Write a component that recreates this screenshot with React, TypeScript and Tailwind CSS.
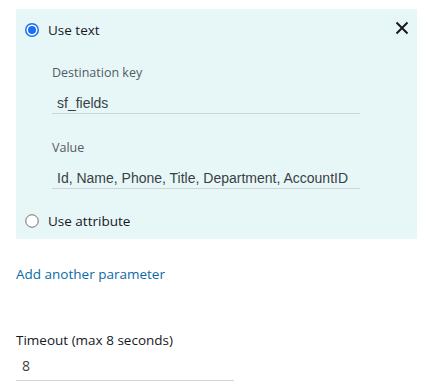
import { useState } from 'react'

const ember = { fontFamily: '"Open Sans", "Noto Sans", sans-serif' }
const arial = { fontFamily: '"Liberation Sans", Arial, sans-serif' }

function Radio({ checked }: { checked: boolean }) {
  return checked ? (
    <svg width="14" height="14" viewBox="0 0 14 14" className="shrink-0">
      <circle cx="7" cy="7" r="6.25" fill="#fff" stroke="#1a6ef2" strokeWidth="1.5" />
      <circle cx="7" cy="7" r="4" fill="#1a6ef2" />
    </svg>
  ) : (
    <svg width="14" height="14" viewBox="0 0 14 14" className="shrink-0">
      <circle cx="7" cy="7" r="6.25" fill="#fff" stroke="#6f6f6f" strokeWidth="1" />
    </svg>
  )
}

function Field({ label, value }: { label: string; value: string }) {
  return (
    <div className="flex flex-col">
      <div className="h-[18px] text-[12.5px] leading-[18px] text-[#545b64]" style={ember}>
        {label}
      </div>
      <div
        className="mt-[11px] h-[21px] w-[308px] whitespace-nowrap border-b border-[#cfd4d4] pl-[5px] text-[14px] leading-[20px] text-[#3b3f44]"
        style={arial}
      >
        {value}
      </div>
    </div>
  )
}

export default function App() {
  const [mode] = useState<'text' | 'attr'>('text')

  return (
    <div className="h-[391px] w-[426px] overflow-hidden bg-white pt-[9px]" style={ember}>
      {/* Parameter panel */}
      <div className="ml-4 flex h-[230px] w-[401px] flex-col bg-[#e7f7f8] pt-[11px]">
        <div className="flex h-[20px] items-center pl-[9px] pr-[8px]">
          <Radio checked={mode === 'text'} />
          <span className="ml-[9px] text-[13.5px] text-[#16191f]">Use text</span>
          <svg width="14" height="14" viewBox="0 0 14 14" className="ml-auto -mt-[5px]">
            <path d="M1.5 1.5 L12.5 12.5 M12.5 1.5 L1.5 12.5" stroke="#16191f" strokeWidth="2" />
          </svg>
        </div>

        <div className="ml-[36px] mt-[24px] flex flex-col">
          <Field label="Destination key" value="sf_fields" />
          <div className="mt-[25px]">
            <Field label="Value" value="Id, Name, Phone, Title, Department, AccountID" />
          </div>
        </div>

        <div className="mt-[22px] flex h-[20px] items-center pl-[9px]">
          <Radio checked={mode === 'attr'} />
          <span className="ml-[9px] text-[13.5px] text-[#16191f]">Use attribute</span>
        </div>
      </div>

      <div className="ml-4 mt-[25px] text-[13.5px] leading-[20px] text-[#0a6aa8]">Add another parameter</div>

      <div className="ml-4 mt-[46px] text-[13.5px] leading-[20px] text-[#16191f]">Timeout (max 8 seconds)</div>
      <div className="ml-4 mt-[7px] h-[24px] w-[218px] border-b border-[#cfd4d4] pl-[6px] text-[14px] leading-[18px] text-[#3b3f44]">
        8
      </div>
    </div>
  )
}
